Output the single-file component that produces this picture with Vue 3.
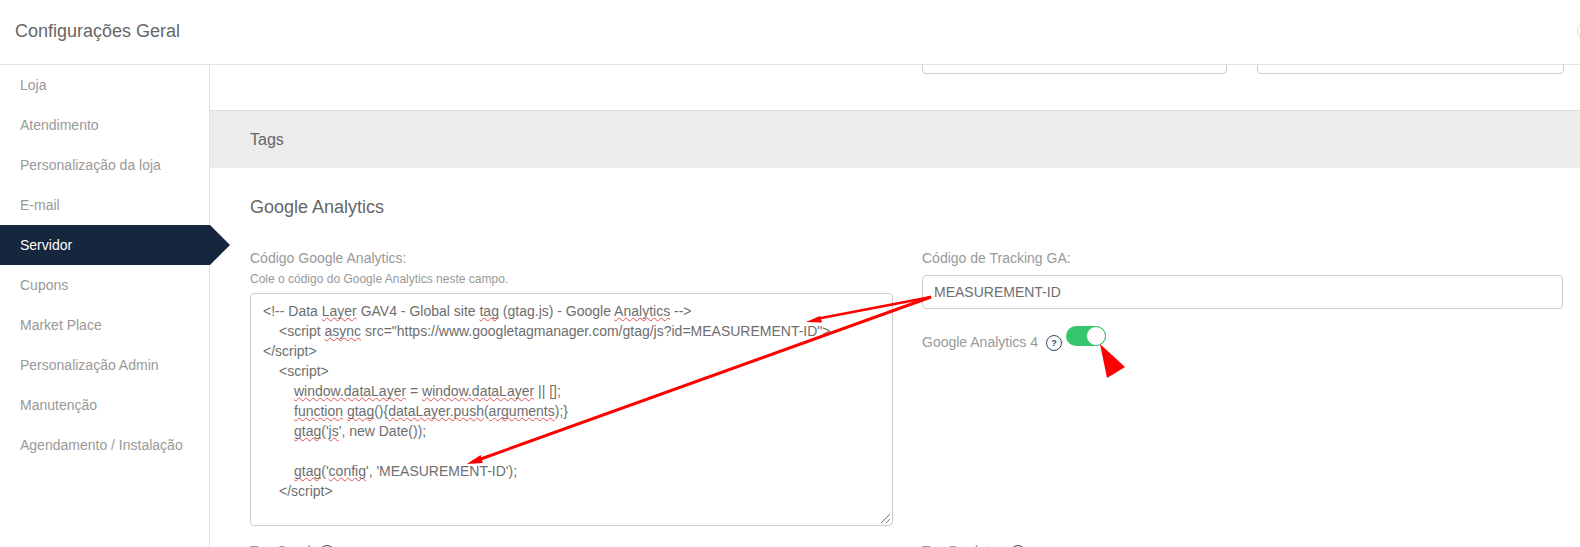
<script setup>
const menu = ['Loja','Atendimento','Personalização da loja','E-mail','Servidor','Cupons','Market Place','Personalização Admin','Manutenção','Agendamento / Instalação']
</script>

<template>
  <div class="page">
    <header class="top">
      <h1>Configurações Geral</h1>
      <span class="top-circle"></span>
    </header>
    <div class="body">
      <nav class="side">
        <a v-for="m in menu" :key="m" :class="['item', { active: m === 'Servidor' }]">{{ m }}</a>
      </nav>
      <main class="main">
        <div class="stubs">
          <div class="stub a"></div>
          <div class="stub b"></div>
        </div>
        <div class="band">Tags</div>
        <section class="sec">
          <h2>Google Analytics</h2>
          <div class="cols">
            <div class="col-l">
              <label>Código Google Analytics:</label>
              <small>Cole o código do Google Analytics neste campo.</small>
              <div class="ta">
                <div>&lt;!-- Data <u>Layer</u> GAV4 - Global site <u>tag</u> (gtag.js) - Google <u>Analytics</u> --&gt;</div>
                <div class="i1">&lt;script <u>async</u> src="https://www.googletagmanager.com/gtag/js?id=MEASUREMENT-ID"&gt;</div>
                <div>&lt;/script&gt;</div>
                <div class="i1">&lt;script&gt;</div>
                <div class="i2"><u>window.dataLayer</u> = <u>window.dataLayer</u> || [];</div>
                <div class="i2"><u>function</u> <u>gtag</u>(){<u>dataLayer.push</u>(<u>arguments</u>);}</div>
                <div class="i2"><u>gtag</u>('<u>js</u>', new Date());</div>
                <div class="i2">&nbsp;</div>
                <div class="i2"><u>gtag</u>('<u>config</u>', 'MEASUREMENT-ID');</div>
                <div class="i1">&lt;/script&gt;</div>
                <svg class="grip" width="11" height="11" viewBox="0 0 11 11"><path d="M1 10 10 1M6 10 10 6" stroke="#777" stroke-width="1" fill="none"/></svg>
              </div>
              <div class="cut">Tag Geral <span class="help"><b>?</b></span></div>
            </div>
            <div class="col-r">
              <label>Código de Tracking GA:</label>
              <div class="inp">MEASUREMENT-ID</div>
              <div class="ga4">
                <span>Google Analytics 4</span>
                <span class="help"><b>?</b></span>
                <span class="toggle"><i></i></span>
              </div>
              <div class="cut r">Tag Produto <span class="help"><b>?</b></span></div>
            </div>
          </div>
        </section>
      </main>
    </div>
    <svg class="marks" width="1580" height="547" viewBox="0 0 1580 547">
      <path d="M931 297 816 319" stroke="#f00" stroke-width="2.5" fill="none"/>
      <path d="M806 322 820 316 822 322.6Z" fill="#f00"/>
      <path d="M931 297 478 460" stroke="#f00" stroke-width="3" fill="none"/>
      <path d="M466.7 464 480.7 455 482.7 463Z" fill="#f00"/>
      <path d="M1100 344 1125 367 1107 378Z" fill="#f00"/>
    </svg>
  </div>
</template>

<style scoped>
.page { position: relative; width: 1580px; height: 547px; overflow: hidden; background: #fff; font-family: "Liberation Sans", Arial, sans-serif; }
.top { height: 64px; border-bottom: 1px solid #e2e2e2; display: flex; align-items: center; padding-left: 15px; position: relative; background: #fff; z-index: 2; }
.top h1 { margin: 0; font-size: 18px; font-weight: 400; color: #666; padding-bottom: 1px; }
.top-circle { position: absolute; left: 1577px; top: 21px; width: 18px; height: 18px; border: 1px solid #ddd; border-radius: 50%; }
.body { display: flex; height: 482px; }
.side { width: 209px; flex: none; border-right: 1px solid #e0e0e0; display: flex; flex-direction: column; }
.item { height: 40px; line-height: 40px; padding-left: 20px; font-size: 14px; color: #999; flex: none; position: relative; }
.item.active { background: #16263d; color: #fff; margin-right: -1px; }
.item.active::after { content: ""; position: absolute; left: 100%; top: 0; border-left: 20px solid #16263d; border-top: 20px solid transparent; border-bottom: 20px solid transparent; }
.main { flex: 1; min-width: 0; }
.stubs { height: 45px; position: relative; }
.stub { position: absolute; top: -10px; height: 19px; border: 1px solid #ccc; border-radius: 4px; box-sizing: border-box; }
.stub.a { left: 712px; width: 305px; }
.stub.b { left: 1047px; width: 307px; }
.band { height: 57px; line-height: 58px; background: #ececec; border-top: 1px solid #dedede; padding-left: 40px; font-size: 16px; color: #666; }
.sec { padding: 28px 0 0 40px; }
h2 { margin: 0; font-size: 18px; font-weight: 400; color: #666; line-height: 22px; }
.cols { display: flex; margin-top: 31px; }
.col-l { width: 643px; flex: none; }
.col-r { width: 641px; margin-left: 29px; flex: none; }
label { display: block; font-size: 14px; color: #999; line-height: 18px; }
small { display: block; font-size: 12px; color: #999; line-height: 16px; margin-top: 4px; }
.ta { position: relative; box-sizing: border-box; height: 233px; margin-top: 6px; border: 1px solid #ccc; border-radius: 4px; padding: 7px 12px; font-size: 14px; line-height: 20px; color: #6e6e6e; }
.i1 { padding-left: 16px; }
.i2 { padding-left: 31px; }
u { text-decoration: underline wavy #e8504f 1px; text-underline-offset: 1px; text-decoration-skip-ink: none; }
.grip { position: absolute; right: 1px; bottom: 1px; }
.cut { margin-top: 16px; font-size: 14px; color: #999; display: flex; gap: 8px; line-height: 18px; align-items: flex-start; }
.cut .help { margin-top: 3px; }
.inp { box-sizing: border-box; height: 34px; margin-top: 8px; border: 1px solid #ccc; border-radius: 4px; padding-left: 11px; line-height: 32px; font-size: 14px; color: #6e6e6e; }
.ga4 { display: flex; align-items: flex-start; font-size: 14px; color: #999; margin-top: 17px; height: 20px; line-height: 33px; }
.ga4 .help { margin: 9px 0 0 8px; }
.help { box-sizing: border-box; display: inline-flex; align-items: center; justify-content: center; width: 16px; height: 16px; border: 1px solid #3a4560; border-radius: 50%; color: #3a4560; flex: none; }
.help b { font-size: 9px; line-height: 1; font-weight: 700; }
.toggle { position: relative; width: 40px; height: 20px; margin-left: 4px; border-radius: 10px; background: #35c66b; flex: none; }
.toggle i { position: absolute; right: 0; top: 0; box-sizing: border-box; width: 20px; height: 20px; border-radius: 50%; background: #fff; border: 1px solid #35c66b; }
.cut.r { margin-top: 196px; gap: 12px; }
.marks { position: absolute; left: 0; top: 0; pointer-events: none; z-index: 3; }
</style>

<style>
body { margin: 0; }
</style>
